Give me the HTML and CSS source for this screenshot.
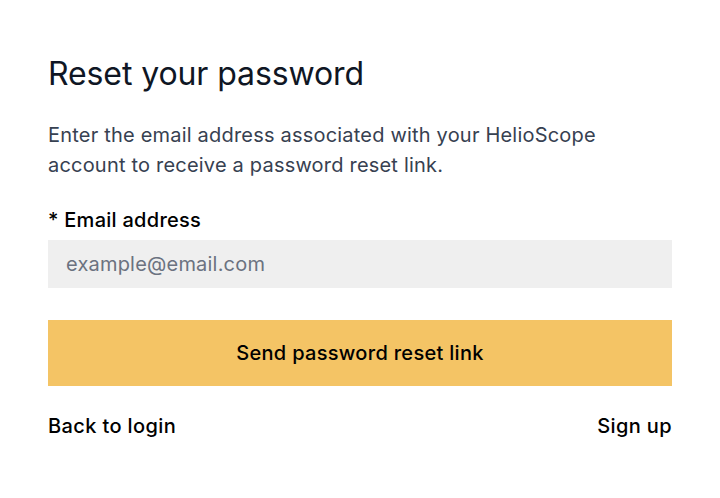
FILE: index.html
```html
<!DOCTYPE html>
<html>
<head>
<meta charset="utf-8">
<link rel="stylesheet" href="styles.css">
</head>
<body>
<main class="card">
  <h1 class="title">Reset your password</h1>
  <p class="intro">Enter the email address associated with your HelioScope account to receive a password reset link.</p>
  <form class="form">
    <label class="label" for="email">* Email address</label>
    <input class="input" id="email" type="email" placeholder="example@email.com">
    <button class="button" type="button">Send password reset link</button>
  </form>
  <nav class="links">
    <a class="link" href="#">Back to login</a>
    <a class="link" href="#">Sign up</a>
  </nav>
</main>
</body>
</html>
```
FILE: styles.css
```css
* { box-sizing: border-box; }
html, body { margin: 0; padding: 0; background: #fff; }
body {
  font-family: Inter, "Noto Sans", sans-serif;
  color: #111827;
}
.card {
  padding: 52px 48px 0 48px;
  display: flex;
  flex-direction: column;
}
.title {
  margin: 0;
  font-size: 32px;
  font-weight: 400;
  line-height: 44px;
  color: #0f1624;
  letter-spacing: -0.1px;
}
.intro {
  margin: 24px 0 0 0;
  font-size: 20px;
  line-height: 30px;
  color: #374151;
  letter-spacing: 0.2px;
  max-width: 580px;
}
.form {
  display: flex;
  flex-direction: column;
  margin-top: 26px;
}
.label {
  font-size: 20px;
  font-weight: 500;
  line-height: 28px;
  color: #000;
  letter-spacing: 0.27px;
}
.input {
  margin-top: 6px;
  height: 48px;
  border: none;
  background: #efefef;
  padding: 0 18px;
  font-family: inherit;
  font-size: 20px;
  letter-spacing: 0.2px;
  color: #111827;
  outline: none;
}
.input::placeholder { color: #6b7280; }
.button {
  margin-top: 32px;
  height: 66px;
  border: none;
  background: #f4c465;
  font-family: inherit;
  font-size: 20px;
  font-weight: 500;
  letter-spacing: 0.3px;
  color: #000;
}
.links {
  margin-top: 26px;
  display: flex;
  justify-content: space-between;
}
.link {
  font-size: 20px;
  font-weight: 500;
  line-height: 28px;
  letter-spacing: 0.38px;
  color: #000;
  text-decoration: none;
}
```
